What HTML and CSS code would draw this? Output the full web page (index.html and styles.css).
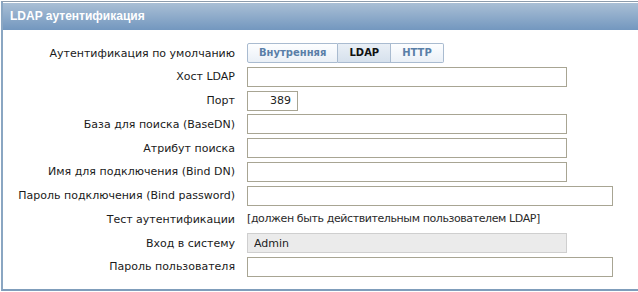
FILE: index.html
```html
<!DOCTYPE html>
<html lang="ru">
<head>
  <meta charset="UTF-8" />
  <title>LDAP аутентификация</title>
  <link rel="stylesheet" href="styles.css">
</head>
<body>
  <div class="panel">
    <div class="panel-head">LDAP аутентификация</div>
    <div class="form">
      <label>Аутентификация по умолчанию</label>
      <div class="switch">
        <span>Внутренняя</span>
        <span class="active">LDAP</span>
        <span>HTTP</span>
      </div>

      <label>Хост LDAP</label>
      <input type="text" class="w-mid">

      <label>Порт</label>
      <input type="text" class="w-port" value="389">

      <label>База для поиска (BaseDN)</label>
      <input type="text" class="w-mid">

      <label>Атрибут поиска</label>
      <input type="text" class="w-mid">

      <label>Имя для подключения (Bind DN)</label>
      <input type="text" class="w-mid">

      <label>Пароль подключения (Bind password)</label>
      <input type="password" class="w-long">

      <label>Тест аутентификации</label>
      <div class="note">[должен быть действительным пользователем LDAP]</div>

      <label>Вход в систему</label>
      <input type="text" class="w-mid readonly" value="Admin" readonly>

      <label>Пароль пользователя</label>
      <input type="password" class="w-long">
    </div>
  </div>
</body>
</html>
```

FILE: styles.css
```css
body {
  margin: 0;
  background: #fff;
  font-family: 'DejaVu Sans', Verdana, sans-serif;
  font-size: 11px;
  color: #1a1a1a;
}
.panel {
  margin: 1px 0 0 1px;
  border-top: 1px solid #8d9cac;
  border-left: 2px solid #8aa6c2;
  border-bottom: 2px solid #7f9dbb;
  height: 290px;
  box-sizing: border-box;
}
.panel-head {
  height: 27px;
  margin-top: 1px;
  padding-left: 7px;
  line-height: 26px;
  font-family: 'Liberation Sans', Arial, sans-serif;
  font-size: 12px;
  font-weight: bold;
  color: #fff;
  background: linear-gradient(#a9bfd5, #7397bf);
}
.form {
  display: grid;
  grid-template-columns: 232px auto;
  grid-auto-rows: 20px;
  column-gap: 12px;
  row-gap: 3.78px;
  padding-top: 13px;
  align-items: center;
  justify-items: start;
}
.form label {
  justify-self: end;
  text-align: right;
}
input {
  height: 20px;
  box-sizing: border-box;
  border: 1px solid #a8a593;
  padding: 0 6px;
  font-family: inherit;
  font-size: 11px;
  color: #222;
  margin: 0;
}
.w-mid { width: 320px; }
.w-long { width: 366px; }
.w-port { width: 51px; text-align: right; }
.readonly {
  background: #ebebeb;
  border-color: #cfcfcf;
}
.note {
  line-height: 20px;
  letter-spacing: -0.4px;
  color: #2a2a2a;
}
.switch {
  display: flex;
  height: 20px;
}
.switch span {
  padding: 0 11px;
  line-height: 18px;
  font-size: 10px;
  font-weight: bold;
  color: #5a7fa8;
  border: 1px solid #a9bbd0;
  border-left: none;
  background: linear-gradient(#fdfeff, #eaf0f7);
}
.switch span:first-child {
  border-left: 1px solid #a9bbd0;
  border-radius: 2px 0 0 2px;
}
.switch span:last-child {
  border-radius: 0 2px 2px 0;
}
.switch .active {
  color: #111;
  background: linear-gradient(#e9eff6, #d6e1ed);
}
```
